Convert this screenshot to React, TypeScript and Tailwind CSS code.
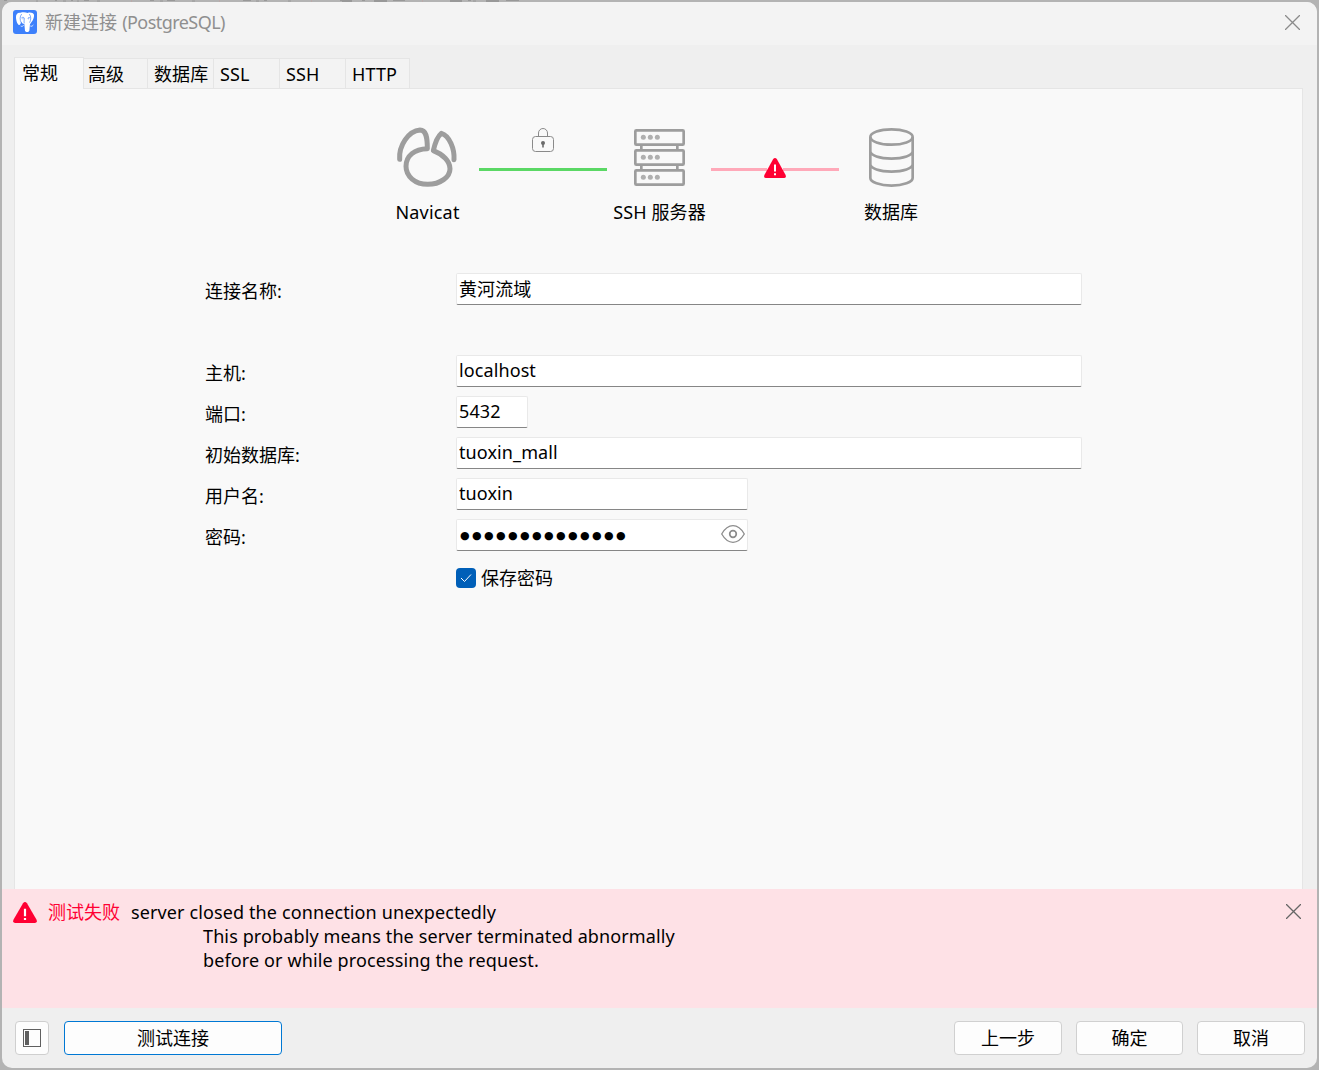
import { useState } from "react"
import clsx from "clsx"

const tabs = [
  { name: "常规", width: "w-[70px]", pad: "pl-[7px]" },
  { name: "高级", width: "w-[64px]", pad: "pl-1" },
  { name: "数据库", width: "w-[66px]", pad: "pl-[6px]" },
  { name: "SSL", width: "w-[66px]", pad: "pl-[6px]" },
  { name: "SSH", width: "w-[66px]", pad: "pl-[6px]" },
  { name: "HTTP", width: "w-[64px]", pad: "pl-[6px]" },
]

const fields = [
  { label: "连接名称:", value: "黄河流域", width: "w-[626px]", gap: "mb-[50px]" },
  { label: "主机:", value: "localhost", width: "w-[626px]", gap: "mb-[9px]" },
  { label: "端口:", value: "5432", width: "w-[72px]", gap: "mb-[9px]" },
  { label: "初始数据库:", value: "tuoxin_mall", width: "w-[626px]", gap: "mb-[9px]" },
  { label: "用户名:", value: "tuoxin", width: "w-[292px]", gap: "mb-[9px]" },
]

const inputBox = "h-8 bg-white border border-[#e9e9e9] border-b-[#868686] rounded-[2px]"

// toolbar of the main window, only its last two rows show above the dialog
function ToolbarEdge() {
  return (
    <svg width="560" height="2" viewBox="0 0 560 2" stroke="#989898" strokeWidth="1" className="block">
      <path d="M4 .5h3M36 1h2M55 .5h2M63 1h3M71 .5h2M77 1h2M84 .5h5M97 1h3M150 .5h4M160 1h3M167 .5h8M192 1h3M243 .5h8M256 1h3M264 .5h3M288 1h3M340 .5h12M342 1.500h10M362 .5h3M374 .5h13M374 1.500h13M393 .5h12M450 .5h12M450 1.500h12M468 .5h3M473 1h3M486 .5h13M486 1.500h13M506 .5h13" />
      <path d="M131 1h1M219 1h1M311 1h1M422 1h1" stroke="#c3a0a0" />
    </svg>
  )
}

function PostgresLogo() {
  return (
    <svg width="24" height="24" viewBox="0 0 72 72">
      <rect width="72" height="72" rx="9" fill="#3d80fb" />
      <path d="M22 8C13 7 8 13 9 24c1 11 5 20 9 21 3 1 5-5 7-9 2 4 5 6 9 6 1 6 1 13 2 20 2 5 11 5 13 0 1-6 1-12 2-20 2-1 3-3 4-5 5-6 9-16 8-23C61 9 52 6 44 9 36 6 29 7 22 8z" fill="#fff" />
      <path d="M26 12c-6 8-6 17-1 27M49 12c6 8 5 17 1 26" fill="none" stroke="#3d80fb" strokeWidth="2" />
      <path d="M25 24c3-3 8-3 9 1 0 6-2 9 0 15M44 25c2-3 5-3 8-1" fill="none" stroke="#3d80fb" strokeWidth="2" />
      <circle cx="30" cy="26" r="1.500" fill="#3d80fb" />
      <circle cx="47" cy="26" r="1.500" fill="#3d80fb" />
      <path d="M23 48c3 2 6 1 9-2M52 48c4 2 6 0 9-3" fill="none" stroke="#fff" strokeWidth="2.500" />
    </svg>
  )
}

function NavicatIcon() {
  return (
    <svg width="62" height="62" viewBox="48 49 186 186" fill="none" stroke="#9d9d9d" strokeWidth="15" strokeLinecap="round" strokeLinejoin="round">
      <path d="M59 149C56 108 85 64 120 61c18 0 22 20 22 56-38 1-64 21-64 53 0 30 27 54 65 54s67-22 67-47c0-22-21-43-50-54 4-18 13-43 24-52 24 7 40 46 38 79" />
    </svg>
  )
}

function ServerIcon() {
  return (
    <svg width="51" height="57" viewBox="102 57 153 171" fill="none" stroke="#9d9d9d" strokeWidth="8">
      {[61, 121, 181].map((y) => (
        <g key={y}>
          <rect x="106" y={y} width="145" height="43" rx="3" />
          <g fill="#b0b0b0" stroke="none">
            <circle cx="130" cy={y + 21} r="7.5" />
            <circle cx="151" cy={y + 21} r="7.5" />
            <circle cx="172" cy={y + 21} r="7.5" />
          </g>
        </g>
      ))}
      <path d="M124 106v13M232 106v13M124 166v13M232 166v13" />
    </svg>
  )
}

function DatabaseIcon() {
  return (
    <svg width="45" height="59" viewBox="807 54 135 177" fill="none" stroke="#9d9d9d" strokeWidth="8">
      <ellipse cx="874.5" cy="81" rx="63.5" ry="23" />
      <path d="M811 81v123c0 12 28 23 63.500 23s63.500-11 63.500-23V81M811 124c0 12 28 22 63.500 22s63.500-10 63.500-22M811 163c0 12 28 22 63.500 22s63.500-10 63.500-22" />
    </svg>
  )
}

function LockIcon() {
  return (
    <svg width="22" height="24" viewBox="0 0 22 24" fill="none" stroke="#8a8a8a">
      <rect x="0.5" y="8.500" width="21" height="15" rx="3" />
      <path d="M6.500 8.500V5a4.500 4.500 0 0 1 9 0v3.500" />
      <circle cx="11" cy="15" r="2" fill="#6b6b6b" stroke="none" />
      <path d="M11 15v4.500" stroke="#6b6b6b" strokeWidth="1.600" />
    </svg>
  )
}

function WarnIcon({ width, height }: { width: number; height: number }) {
  return (
    <svg width={width} height={height} viewBox="0 0 22 20" preserveAspectRatio="none">
      <path d="M9.200 1.100Q11-1 12.800 1.100L21.600 17Q22.500 20 20 20H2Q-.5 20 .4 17z" fill="#ff0033" />
      <path d="M11 6.500v7M11 15.200v2" stroke="#fff" strokeWidth="2" />
    </svg>
  )
}

function CloseIcon({ color }: { color: string }) {
  return (
    <svg width="15" height="15" viewBox="0 0 15 15" stroke={color} strokeWidth="1.300">
      <path d="M0 0l15 15M15 0L0 15" />
    </svg>
  )
}

export default function App() {
  const [active, setActive] = useState("常规")
  const [saved, setSaved] = useState(true)

  return (
    <div className="h-[1070px] w-[1319px] overflow-hidden bg-[#b3b3b3] font-['Noto_Sans','Noto_Sans_CJK_SC',sans-serif] text-[18px] leading-6 text-black">
      <ToolbarEdge />
      <div className="mx-[2px] flex h-[1066px] w-[1315px] flex-col overflow-hidden rounded-[10px] bg-[#efefef]">
        <header className="flex h-[43px] shrink-0 items-center bg-[#f3f3f3] pr-[17px] pl-[11px]">
          <div className="mb-[3px]"><PostgresLogo /></div>
          <span className="mb-[3px] ml-2 text-[#8f8f8f]">
            新建连接<span className="ml-[1px] tracking-[-0.55px]"> (PostgreSQL)</span>
          </span>
          <button className="mb-[2px] ml-auto"><CloseIcon color="#8b8b8b" /></button>
        </header>

        <div className="mt-[12px] flex h-8 shrink-0 items-end pl-3">
          {tabs.map((tab) => (
            <button
              key={tab.name}
              onClick={() => setActive(tab.name)}
              className={clsx(
                "border-[#e5e5e5] text-left whitespace-nowrap",
                tab.width,
                tab.pad,
                active === tab.name
                  ? "z-10 h-8 border border-b-0 bg-[#f9f9f9] pb-[1px]"
                  : "h-[31px] border-t border-r bg-[#f3f3f3] tracking-[0.1px]"
              )}
            >
              {tab.name}
            </button>
          ))}
        </div>

        <main className="mx-3 -mt-[1px] flex h-[801px] w-[1289px] shrink-0 flex-col border border-b-0 border-[#e5e5e5] bg-[#f9f9f9]">
          <div className="flex h-[184px] shrink-0 pt-[37px] pl-[360px]">
            <div className="flex w-[104px] flex-col items-center">
              <div className="flex h-[62px] items-center"><NavicatIcon /></div>
              <span className="mt-[12px] ml-[1px] tracking-[0.2px]">Navicat</span>
            </div>
            <div className="flex w-32 flex-col items-center pt-[2px]">
              <LockIcon />
              <div className="mt-[16px] h-[3px] w-full bg-[#5bd865]" />
            </div>
            <div className="flex w-[104px] flex-col items-center">
              <div className="flex h-[62px] items-center"><ServerIcon /></div>
              <span className="mt-[12px] ml-[1px] tracking-[0.1px]">SSH 服务器</span>
            </div>
            <div className="flex w-32 items-start pt-[32px]">
              <div className="mt-[10px] -mr-[3px] h-[3px] flex-1 bg-[#ffa9b9]" />
              <div className="z-10"><WarnIcon width={22} height={20} /></div>
              <div className="mt-[10px] -ml-[3px] h-[3px] flex-1 bg-[#ffa9b9]" />
            </div>
            <div className="flex w-[104px] flex-col items-center">
              <div className="flex h-[62px] items-center"><DatabaseIcon /></div>
              <span className="mt-[12px]">数据库</span>
            </div>
          </div>

          <div className="flex flex-col pl-[190px]">
            {fields.map((f) => (
              <div key={f.label} className={clsx("flex h-8 items-center", f.gap)}>
                <label className="mt-[3px] w-[251px]">{f.label}</label>
                <input defaultValue={f.value} className={clsx(inputBox, f.width, "pb-[3px] pl-[2px] tracking-[0.1px] outline-none")} />
              </div>
            ))}
            <div className="flex h-8 items-center">
              <label className="mt-[3px] w-[251px]">密码:</label>
              <div className={clsx(inputBox, "flex w-[292px] items-center justify-between pr-[2px] pb-[2px] pl-[3px]")}>
                <span className="mt-1 font-['DejaVu_Sans',sans-serif] text-[11px] tracking-[2.400px]">●●●●●●●●●●●●●●</span>
                <svg width="24" height="18" viewBox="0 0 24 18" fill="none" stroke="#8c8c8c" strokeWidth="1.300">
                  <path d="M.7 9C4 3.300 8 .7 12 .7S20 3.300 23.300 9C20 14.700 16 17.300 12 17.300S4 14.700.7 9z" />
                  <circle cx="12" cy="9" r="3.300" strokeWidth="1.700" />
                </svg>
              </div>
            </div>
            <button onClick={() => setSaved(!saved)} className="mt-[15px] ml-[251px] flex items-center gap-[5px] text-left">
              <span className={clsx("flex h-5 w-5 items-center justify-center rounded-[4px]", saved ? "bg-[#005fb8]" : "border border-[#868686] bg-white")}>
                {saved && (
                  <svg width="12" height="10" viewBox="0 0 12 10" fill="none" stroke="#fff">
                    <path d="M1 5l3.500 3.500L11 1.500" />
                  </svg>
                )}
              </span>
              保存密码
            </button>
          </div>
        </main>

        <section className="flex h-[119px] shrink-0 items-start bg-[#fee1e6] pt-[11px] pr-[16px] pl-[11px]">
          <div className="mt-[2px]"><WarnIcon width={24} height={21} /></div>
          <span className="ml-[11px] text-[#ff0033]">测试失败</span>
          <div className="ml-[11px] tracking-[0.12px]">
            <p>server closed the connection unexpectedly</p>
            <p className="pl-[72px]">This probably means the server terminated abnormally</p>
            <p className="pl-[72px]">before or while processing the request.</p>
          </div>
          <button className="mt-1 ml-auto"><CloseIcon color="#666666" /></button>
        </section>

        <footer className="flex flex-1 items-start pt-[13px] pr-3 pl-[13px]">
          <button className="flex h-[34px] w-[34px] items-center justify-center rounded-[4px] border border-[#cfcfcf] bg-[#fdfdfd]">
            <svg width="18" height="18" viewBox="0 0 18 18">
              <rect x="0.5" y="0.5" width="17" height="17" fill="none" stroke="#5f5f5f" />
              <rect x="2" y="2" width="4" height="14" fill="#5f5f5f" />
            </svg>
          </button>
          <button className="ml-[15px] h-[34px] w-[218px] rounded-[4px] border border-[#0078d4] bg-[#fdfdfd]">测试连接</button>
          <div className="ml-auto flex gap-[14px]">
            <button className="h-[34px] w-[108px] rounded-[4px] border border-[#d0d0d0] bg-[#fdfdfd]">上一步</button>
            <button className="h-[34px] w-[107px] rounded-[4px] border border-[#d0d0d0] bg-[#fdfdfd]">确定</button>
            <button className="h-[34px] w-[108px] rounded-[4px] border border-[#d0d0d0] bg-[#fdfdfd]">取消</button>
          </div>
        </footer>
      </div>
    </div>
  )
}
